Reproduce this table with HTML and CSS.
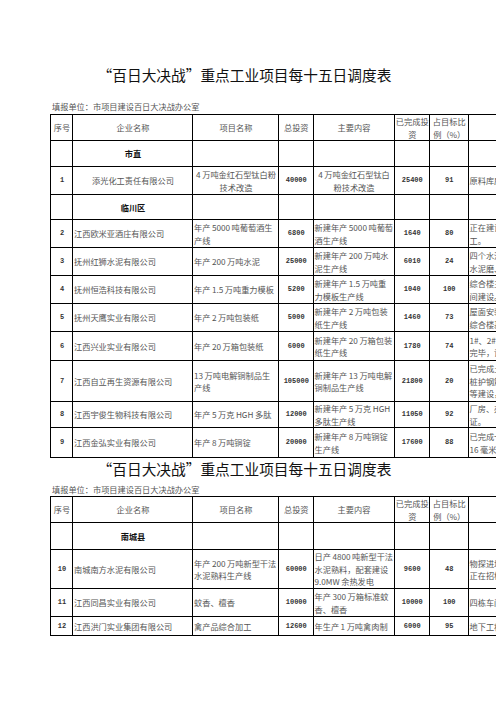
FILE: index.html
```html
<!DOCTYPE html>
<html lang="zh-CN">
<head>
<meta charset="utf-8">
<title>“百日大决战”重点工业项目每十五日调度表</title>
<link rel="stylesheet" href="styles.css">
</head>
<body>
<div class="page">
  <h1 class="title first">“百日大决战”重点工业项目每十五日调度表</h1>
  <p class="unit">填报单位：市项目建设百日大决战办公室</p>
  <table class="sheet">
    <colgroup>
      <col class="w1"><col class="w2"><col class="w3"><col class="w4"><col class="w5"><col class="w6"><col class="w7"><col class="w8">
    </colgroup>
    <tr class="h-head">
      <th>序号</th><th>企业名称</th><th>项目名称</th><th>总投资</th><th>主要内容</th><th>已完成投资</th><th>占目标比例（%）</th><th>工程形象进度</th>
    </tr>
    <tr class="h-region">
      <td></td><td class="region">市直</td><td></td><td></td><td></td><td></td><td></td><td></td>
    </tr>
    <tr class="h28 center">
      <td class="n">1</td><td>添光化工责任有限公司</td><td>4 万吨金红石型钛白粉技术改造</td><td class="n">40000</td><td>4 万吨金红石型钛白粉技术改造</td><td class="n">25400</td><td class="n">91</td><td class="prog">原料库房主体已完工</td>
    </tr>
    <tr class="h25">
      <td></td><td class="region">临川区</td><td></td><td></td><td></td><td></td><td></td><td></td>
    </tr>
    <tr class="h28">
      <td class="n">2</td><td>江西欧米亚酒庄有限公司</td><td>年产 5000 吨葡萄酒生产线</td><td class="n">6800</td><td>新建年产 5000 吨葡萄酒生产线</td><td class="n">1640</td><td class="n">80</td><td class="prog">正在建设车间主体，设备基础施<br>工。</td>
    </tr>
    <tr class="h28">
      <td class="n">3</td><td>抚州红狮水泥有限公司</td><td>年产 200 万吨水泥</td><td class="n">25000</td><td>新建年产 200 万吨水泥生产线</td><td class="n">6010</td><td class="n">24</td><td class="prog">四个水泥储库主体完工，<br>水泥磨、窑尾建设中。</td>
    </tr>
    <tr class="h28">
      <td class="n">4</td><td>抚州恒浩科技有限公司</td><td>年产 1.5 万吨重力模板</td><td class="n">5200</td><td>新建年产 1.5 万吨重力模板生产线</td><td class="n">1040</td><td class="n">100</td><td class="prog">综合楼主体完工，正在进行车<br>间建设。</td>
    </tr>
    <tr class="h28">
      <td class="n">5</td><td>抚州天鹰实业有限公司</td><td>年产 2 万吨包装纸</td><td class="n">5000</td><td>新建年产 2 万吨包装纸生产线</td><td class="n">1460</td><td class="n">73</td><td class="prog">屋面安装完成，<br>综合楼基础施工。</td>
    </tr>
    <tr class="h29">
      <td class="n">6</td><td>江西兴业实业有限公司</td><td>年产 20 万箱包装纸</td><td class="n">6000</td><td>新建年产 20 万箱包装纸生产线</td><td class="n">1780</td><td class="n">74</td><td class="prog">1#、2#、3#车间钢结构安装<br>完毕，设备安装中。</td>
    </tr>
    <tr class="h41">
      <td class="n">7</td><td>江西自立再生资源有限公司</td><td>13 万吨电解铜制品生产线</td><td class="n">105000</td><td>新建年产 13 万吨电解铜制品生产线</td><td class="n">21800</td><td class="n">20</td><td class="prog">已完成土地平整，<br>桩护钢筋基础<br>等建设，设备订购中。</td>
    </tr>
    <tr class="h26">
      <td class="n">8</td><td>江西宇俊生物科技有限公司</td><td>年产 5 万克 HGH 多肽</td><td class="n">12000</td><td>新建年产 5 万克 HGH 多肽生产线</td><td class="n">11050</td><td class="n">92</td><td class="prog">厂房、办公楼已完工，正在办理相关<br>证。</td>
    </tr>
    <tr class="h30">
      <td class="n">9</td><td>江西金弘实业有限公司</td><td>年产 8 万吨铜锭</td><td class="n">20000</td><td>新建年产 8 万吨铜锭生产线</td><td class="n">17600</td><td class="n">88</td><td class="prog">已完成一期厂房建设，<br>16 毫米铜杆生产线调试。</td>
    </tr>
  </table>

  <h1 class="title second">“百日大决战”重点工业项目每十五日调度表</h1>
  <p class="unit second">填报单位：市项目建设百日大决战办公室</p>
  <table class="sheet">
    <colgroup>
      <col class="w1"><col class="w2"><col class="w3"><col class="w4"><col class="w5"><col class="w6"><col class="w7"><col class="w8">
    </colgroup>
    <tr class="h-head">
      <th>序号</th><th>企业名称</th><th>项目名称</th><th>总投资</th><th>主要内容</th><th>已完成投资</th><th>占目标比例（%）</th><th>工程形象进度</th>
    </tr>
    <tr class="h27">
      <td></td><td class="region">南城县</td><td></td><td></td><td></td><td></td><td></td><td></td>
    </tr>
    <tr class="h39">
      <td class="n">10</td><td>南城南方水泥有限公司</td><td>年产 200 万吨新型干法水泥熟料生产线</td><td class="n">60000</td><td>日产 4800 吨新型干法水泥熟料，配套建设 9.0MW 余热发电</td><td class="n">9600</td><td class="n">48</td><td class="prog">物探进场勘探，<br>正在招标。</td>
    </tr>
    <tr class="h28">
      <td class="n">11</td><td>江西同昌实业有限公司</td><td>蚊香、檀香</td><td class="n">10000</td><td>年产 300 万箱标准蚊香、檀香</td><td class="n">10000</td><td class="n">100</td><td class="prog">四栋车间主体完工。</td>
    </tr>
    <tr class="h19">
      <td class="n">12</td><td>江西洪门实业集团有限公司</td><td>禽产品综合加工</td><td class="n">12600</td><td><div class="one-line">年生产 1 万吨禽肉制品、熟食制品生产线</div></td><td class="n">6000</td><td class="n">95</td><td class="prog">地下工程施工中。</td>
    </tr>
  </table>
</div>
</body>
</html>
```

FILE: styles.css
```css
html, body {
  margin: 0;
  padding: 0;
  background: #ffffff;
  overflow: hidden;
}

.page {
  width: 496px;
  height: 702px;
  overflow: hidden;
  font-family: "Noto Sans CJK SC", "Noto Sans", sans-serif;
  color: #555555;
}

.title {
  margin: 0;
  width: 489px;
  padding-right: 7px;
  height: 20px;
  line-height: 20px;
  font-size: 14.7px;
  font-weight: normal;
  font-feature-settings: "fwid" 1;
  color: #111111;
  text-align: center;
  white-space: nowrap;
}

.title.first {
  padding-top: 65px;
}

.title.second {
  margin-top: 1px;
}

.unit {
  margin: 15px 0 2px 52px;
  font-size: 8.2px;
  line-height: 12px;
  color: #555555;
  white-space: nowrap;
}

.unit.second {
  margin-top: 4px;
  margin-bottom: 1px;
}

.sheet {
  margin-left: 50px;
  border-collapse: collapse;
  table-layout: fixed;
  width: 567.5px;
  font-size: 8.2px;
  line-height: 12.5px;
  word-spacing: -0.3px;
}

.w1 { width: 22px; }
.w2 { width: 120px; }
.w3 { width: 86px; }
.w4 { width: 34.5px; }
.w5 { width: 81px; }
.w6 { width: 35.5px; }
.w7 { width: 38.5px; }
.w8 { width: 150px; }

.sheet th,
.sheet td {
  border: 1px solid #000000;
  padding: 0 0 0 1px;
  vertical-align: middle;
  text-align: left;
  overflow: hidden;
  word-break: break-all;
}

.sheet th {
  font-weight: normal;
  text-align: center;
  color: #555555;
}

.h-head { height: 26px; }
.h-region { height: 26px; }
.h19 { height: 19px; }
.h25 { height: 25px; }
.h26 { height: 26px; }
.h27 { height: 27px; }
.h28 { height: 28px; }
.h29 { height: 29px; }
.h30 { height: 30px; }
.h39 { height: 39px; }
.h41 { height: 41px; }

.center td {
  text-align: center;
}

.sheet td.n {
  text-align: center;
  font-family: "Liberation Mono", "DejaVu Sans Mono", monospace;
  font-weight: bold;
  font-size: 7px;
  color: #333333;
  word-break: normal;
}

.sheet td.region {
  text-align: center;
  font-weight: bold;
  color: #111111;
}

.sheet td.prog {
  text-align: left;
  white-space: nowrap;
}

.one-line {
  height: 12.5px;
  overflow: hidden;
}
```
